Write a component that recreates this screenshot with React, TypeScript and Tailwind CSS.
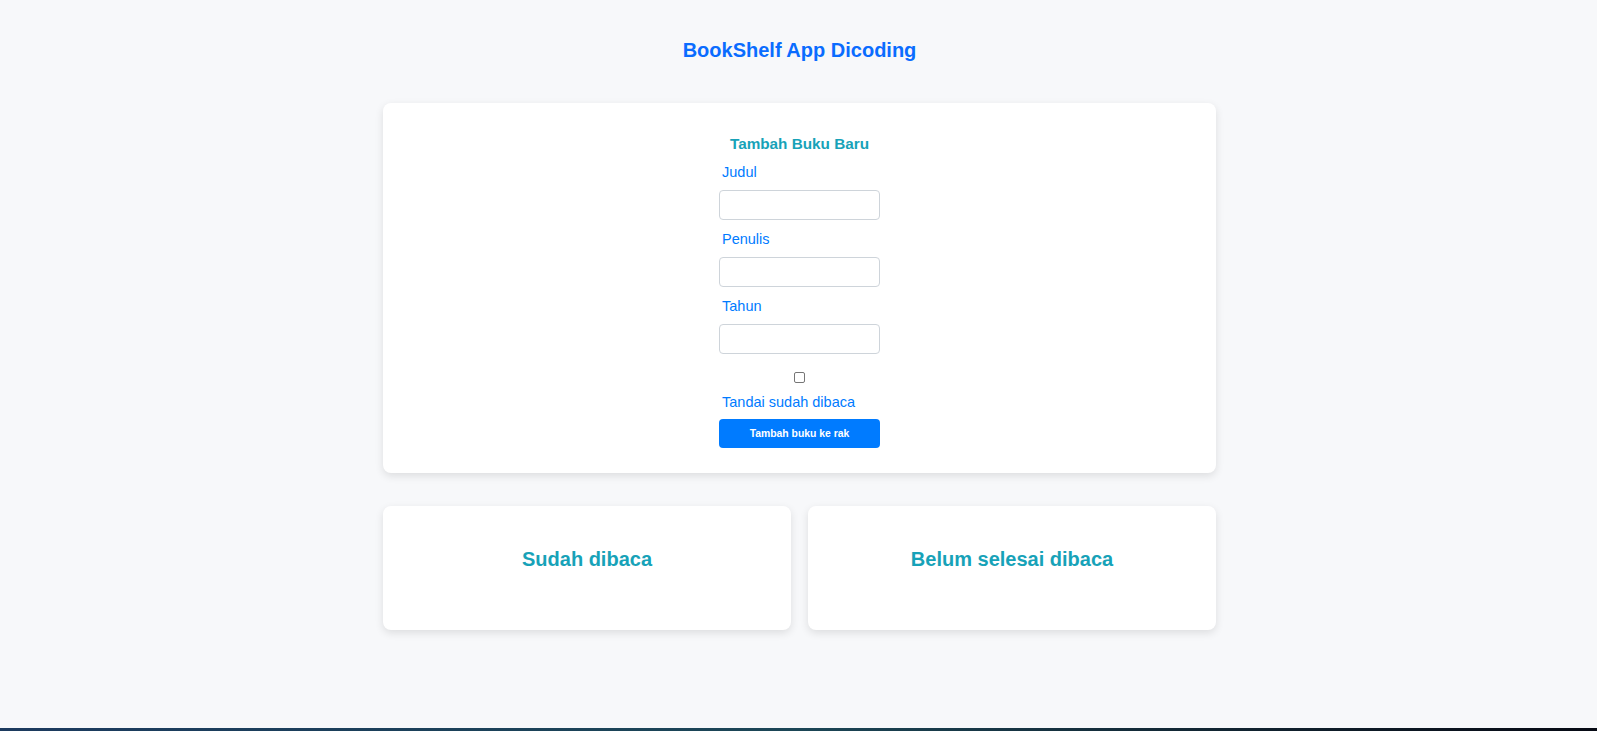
import React from "react";

export default function App() {
  const labelCls =
    "block h-[20px] leading-[20px] pl-[3px] text-[14.5px] text-[#007bff]";
  const inputCls =
    "block w-full h-[30px] rounded-[4px] border border-[#ced4da] bg-white";
  return (
    <div
      className="min-h-[731px] flex flex-col bg-[#f7f8fa]"
      style={{ fontFamily: '"Liberation Sans", Arial, sans-serif' }}
    >
      <div className="flex-1 flex flex-col items-center pl-[2px]">
        <h1 className="mt-[38px] h-[24px] leading-[24px] text-[20px] font-bold text-[#0a6cff]">
          BookShelf App Dicoding
        </h1>

        <section className="mt-[41px] w-[833px] rounded-[8px] bg-white shadow-[0_3px_8px_rgba(0,0,0,0.11)] pt-[31px] pb-[25px] flex flex-col items-center">
          <h3 className="h-[20px] leading-[20px] text-[15.3px] font-bold text-[#17a2b8]">
            Tambah Buku Baru
          </h3>
          <form
            className="w-[161px] flex flex-col"
            onSubmit={(e) => e.preventDefault()}
          >
            <label className={`${labelCls} mt-[8px]`}>Judul</label>
            <input type="text" className={`${inputCls} mt-[8px]`} />
            <label className={`${labelCls} mt-[9px]`}>Penulis</label>
            <input type="text" className={`${inputCls} mt-[8px]`} />
            <label className={`${labelCls} mt-[9px]`}>Tahun</label>
            <input type="number" className={`${inputCls} mt-[8px]`} />
            <div className="mt-[18px] flex justify-center h-[11px]">
              <input
                type="checkbox"
                className="m-0 w-[11px] h-[11px] appearance-none rounded-[2px] border border-[#767676] bg-white"
              />
            </div>
            <label className={`${labelCls} mt-[9px]`}>Tandai sudah dibaca</label>
            <button
              type="submit"
              className="mt-[7px] h-[29px] w-full rounded-[4px] bg-[#007bff] text-white text-[10.4px] font-bold"
            >
              Tambah buku ke rak
            </button>
          </form>
        </section>

        <div className="mt-[33px] w-[833px] grid grid-cols-2 gap-[17px]">
          <section className="h-[124px] rounded-[8px] bg-white shadow-[0_3px_8px_rgba(0,0,0,0.11)] pt-[41px] flex justify-center">
            <h2 className="h-[24px] leading-[24px] text-[20px] font-bold text-[#17a2b8]">
              Sudah dibaca
            </h2>
          </section>
          <section className="h-[124px] rounded-[8px] bg-white shadow-[0_3px_8px_rgba(0,0,0,0.11)] pt-[41px] flex justify-center">
            <h2 className="h-[24px] leading-[24px] text-[20px] font-bold text-[#17a2b8]">
              Belum selesai dibaca
            </h2>
          </section>
        </div>
      </div>
      <div className="h-[3px] bg-gradient-to-r from-[#1c3a5e] via-[#1b4656] to-[#070a14]" />
    </div>
  );
}
